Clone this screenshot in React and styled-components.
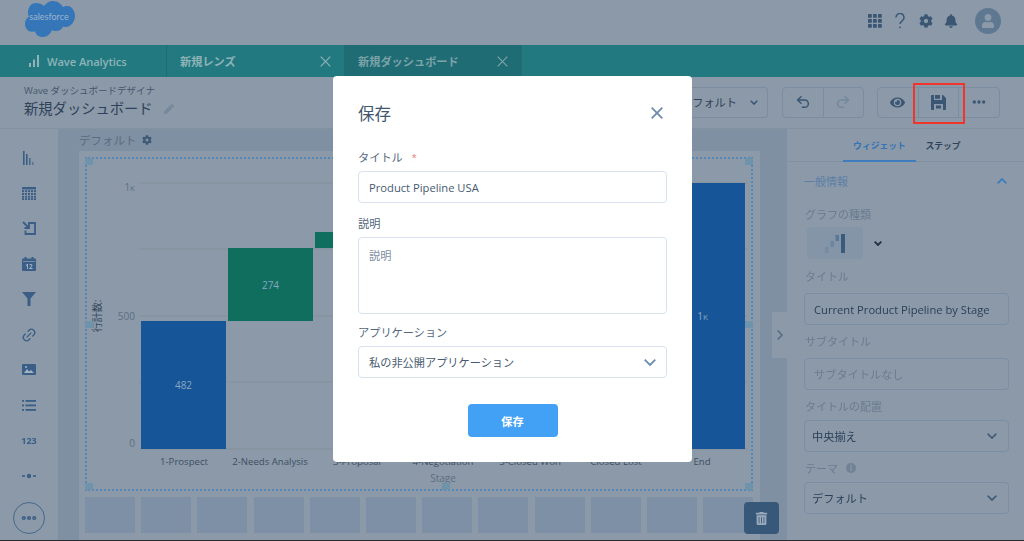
import React from 'react';
import styled, { createGlobalStyle } from 'styled-components';
import { Undo2, Redo2, MoreHorizontal, Link2 } from 'lucide-react';
import { FaCog, FaBell, FaUser, FaEye, FaPen, FaTrashAlt } from 'react-icons/fa';

const FONT = `"Open Sans", "Noto Sans CJK JP", sans-serif`;

const Global = createGlobalStyle`
  html, body { margin: 0; padding: 0; background: #8b99a8; }
  * { box-sizing: border-box; }
  body { font-family: ${FONT}; }
`;

const Page = styled.div`
  position: relative;
  width: 1024px;
  height: 541px;
  overflow: hidden;
  border-bottom: 1px solid #2c2c2e;
`;

const Backdrop = styled.div`
  display: flex;
  flex-direction: column;
  height: 100%;
  filter: blur(0.45px);
`;

const TopBar = styled.div`
  height: 45px;
  flex: none;
  display: flex;
  align-items: center;
  justify-content: space-between;
  padding: 0 23px;
  background: #8b99a8;
`;

const TopIcons = styled.div`
  display: flex;
  align-items: center;
  color: #3a5673;
  margin-top: -3px;
`;

const TopIcon = styled.span`
  display: flex;
  margin-left: ${p => p.$ml}px;
`;

const Avatar = styled.div`
  width: 26px;
  height: 26px;
  margin-left: 17px;
  border-radius: 50%;
  background: #5e7891;
  color: #8b99a8;
  display: flex;
  align-items: center;
  justify-content: center;
  overflow: hidden;
`;

const TabBar = styled.div`
  height: 32px;
  flex: none;
  display: flex;
  background: #227a80;
`;

const Tab = styled.div`
  width: ${p => p.$w}px;
  display: flex;
  align-items: center;
  justify-content: space-between;
  padding: 0 13px 0 ${p => p.$pl}px;
  font-size: 11.2px;
  font-weight: 600;
  border-right: 1px solid ${p => (p.$active ? '#1f6c75' : '#1d6c72')};
  background: ${p => (p.$active ? '#1f6c75' : 'transparent')};
  color: ${p => (p.$active ? '#7da3a8' : '#8fb3b8')};
`;

const TabLabel = styled.span`
  display: flex;
  align-items: center;
  gap: 7px;
  letter-spacing: -0.1px;
`;

const Header = styled.div`
  height: 52px;
  flex: none;
  display: flex;
  align-items: center;
  justify-content: space-between;
  padding: 0 24px;
  background: #8b99a8;
  border-bottom: 1px solid #83929f;
`;

const HeaderTitles = styled.div`
  display: flex;
  flex-direction: column;
  margin-top: -2px;
`;

const Crumb = styled.div`
  font-size: 9.5px;
  line-height: 14px;
  color: #46566b;
`;

const TitleRow = styled.div`
  display: flex;
  align-items: center;
  gap: 11px;
  font-size: 14.3px;
  line-height: 21px;
  color: #2f4259;
  svg { color: #76889b; }
`;

const Toolbar = styled.div`
  display: flex;
  align-items: center;
  margin-top: -1px;
`;

const ButtonGroup = styled.div`
  display: flex;
  width: ${p => p.$w}px;
  height: 31px;
  margin-left: ${p => p.$ml}px;
  border: 1px solid #7a8da1;
  border-radius: 4px;
`;

const ToolButton = styled.div`
  flex: 1;
  display: flex;
  align-items: center;
  justify-content: center;
  color: ${p => (p.$dim ? '#73889d' : '#3a5673')};
  & + & { border-left: 1px solid #7a8da1; }
`;

const ViewDrop = styled.div`
  display: flex;
  align-items: center;
  gap: 13px;
  height: 31px;
  padding-right: 9px;
  border: 1px solid #7a8da1;
  border-left: none;
  border-radius: 0 4px 4px 0;
  font-size: 11.2px;
  color: #2f4259;
`;

const Body = styled.div`
  flex: 1;
  min-height: 0;
  display: flex;
`;

const Rail = styled.div`
  width: 59px;
  flex: none;
  display: flex;
  flex-direction: column;
  align-items: center;
  background: #8b99a8;
  border-right: 1px solid #7f90a2;
  color: #3a5e85;
  padding-top: 11px;
`;

const RailItem = styled.div`
  height: 35.4px;
  flex: none;
  width: 100%;
  display: flex;
  align-items: center;
  justify-content: center;
  font-size: 9px;
  font-weight: 700;
`;

const RailMore = styled.div`
  width: 32px;
  height: 32px;
  margin-top: 8px;
  border: 1px solid #44698c;
  border-radius: 50%;
  display: flex;
  align-items: center;
  justify-content: center;
`;

const Canvas = styled.div`
  width: 728px;
  flex: none;
  position: relative;
  background: #7f90a3;
  padding-left: 20px;
`;

const CanvasTitle = styled.div`
  height: 22px;
  display: flex;
  align-items: center;
  gap: 5px;
  font-size: 11.5px;
  color: #5a6c80;
  svg { color: #3d5973; }
`;

const Sheet = styled.div`
  width: 681px;
  height: 390px;
  background: #8b99a8;
  padding: 6px;
`;

const Selection = styled.div`
  position: relative;
  width: 668px;
  height: 334px;
  border: 2px dotted #5287b8;
`;

const Handle = styled.span`
  position: absolute;
  width: 8px;
  height: 7px;
  background: #6f93ab;
  left: ${p => p.$x}px;
  top: ${p => p.$y}px;
`;

const ChipRow = styled.div`
  display: flex;
  gap: 6.2px;
  margin-top: 6px;
`;

const Chip = styled.div`
  width: 50px;
  height: 36px;
  flex: none;
  background: #7e90a5;
`;

const TrashBtn = styled.div`
  position: absolute;
  left: 685px;
  top: 373px;
  width: 35px;
  height: 32px;
  border-radius: 4px;
  background: #38587a;
  color: #9aaaba;
  display: flex;
  align-items: center;
  justify-content: center;
`;

const Collapser = styled.div`
  position: absolute;
  right: 0;
  top: 183px;
  width: 15px;
  height: 46px;
  background: #8b99a8;
  color: #4f6a85;
  display: flex;
  align-items: center;
  justify-content: center;
`;

const Panel = styled.div`
  flex: 1;
  background: #8b99a8;
  display: flex;
  flex-direction: column;
`;

const PanelTabs = styled.div`
  height: 33px;
  flex: none;
  display: flex;
  padding-left: 56px;
  border-bottom: 1px solid #7f90a2;
`;

const PanelTab = styled.div`
  width: ${p => p.$w}px;
  display: flex;
  align-items: center;
  justify-content: center;
  font-size: 8.8px;
  font-weight: 700;
  color: ${p => (p.$on ? '#3573b3' : '#2f4259')};
  box-shadow: ${p => (p.$on ? 'inset 0 -2px 0 #3f7dbd' : 'none')};
  margin-bottom: -1px;
`;

const PanelBody = styled.div`
  padding: 0 15px 0 17px;
`;

const Section = styled.div`
  height: 37px;
  margin-bottom: 5px;
  display: flex;
  align-items: center;
  justify-content: space-between;
  font-size: 11px;
  color: #5c7fa6;
  padding-right: 2px;
`;

const PLabel = styled.div`
  height: 20px;
  display: flex;
  align-items: center;
  gap: 8px;
  padding-left: 1px;
  font-size: 11px;
  color: #6b7c90;
`;

const ChartType = styled.div`
  display: flex;
  align-items: center;
  gap: 11px;
  margin: 3px 0 7px 3px;
`;

const ChartThumb = styled.div`
  width: 56px;
  height: 32px;
  border-radius: 4px;
  background: #8495a7;
  display: flex;
  align-items: center;
  justify-content: center;
`;

const PField = styled.div`
  height: 32px;
  margin: ${p => p.$mt}px 0 6px;
  display: flex;
  align-items: center;
  justify-content: space-between;
  padding: 0 ${p => (p.$sel ? 11 : 9)}px 0 ${p => (p.$sel ? 7 : 9)}px;
  border: 1px solid #7a8fa5;
  border-radius: 4px;
  font-size: 11.2px;
  white-space: nowrap;
  color: ${p => (p.$ph ? '#6b7c90' : '#2c4059')};
`;

const Dialog = styled.div`
  position: absolute;
  left: 333px;
  top: 76px;
  width: 359px;
  height: 386px;
  background: #fff;
  border-radius: 4px;
  padding: 0 25px;
  display: flex;
  flex-direction: column;
`;

const ModalHead = styled.div`
  height: 75px;
  flex: none;
  display: flex;
  align-items: center;
  justify-content: space-between;
  padding: 0 4px 1px 0;
  font-size: 16.5px;
  color: #41566f;
`;

const MLabel = styled.div`
  height: 20px;
  flex: none;
  font-size: 11.2px;
  line-height: 14px;
  color: #54677e;
  display: flex;
  align-items: flex-start;
  gap: 9px;
`;

const Req = styled.span`
  color: #e4776d;
  font-size: 9px;
`;

const MInput = styled.div`
  height: 32px;
  flex: none;
  margin-bottom: 14px;
  display: flex;
  align-items: center;
  justify-content: space-between;
  padding: 0 10px;
  border: 1px solid #d8e2ee;
  border-radius: 4px;
  font-size: 11.2px;
  color: #475a70;
`;

const MArea = styled.div`
  height: 77px;
  flex: none;
  margin-bottom: 12px;
  padding: 10px;
  border: 1px solid #d8e2ee;
  border-radius: 4px;
  font-size: 11.2px;
  line-height: 16px;
  color: #7d8ea3;
`;

const SaveButton = styled.div`
  align-self: center;
  width: 90px;
  height: 33px;
  margin-top: 12px;
  border-radius: 4px;
  background: #42a1f5;
  color: #fff;
  display: flex;
  align-items: center;
  justify-content: center;
  font-size: 11.2px;
  font-weight: 600;
`;

const RedBox = styled.div`
  position: absolute;
  left: 913px;
  top: 83px;
  width: 52px;
  height: 41px;
  border: 2px solid #f2352a;
`;

const Logo = () => (
  <svg width="52" height="37" viewBox="0 0 52 37" style={{ marginTop: -6 }}>
    <path fill="#3576b8" d="M21 5c2-3 5-5 9-5 5 0 8 3 10 6 1.500-.6 3-1 4-1 5 0 8 5 8 10s-4 11-9 11l-3-.3c-1 2.800-4 4.300-7 4.300-1.500 0-3-.4-4-1-1 3.500-5 7-9 7-5 0-7-2.500-8-5.500l-3 .3c-4 0-7-3.500-7-8 0-3 1.500-5.500 4-7-.5-1-1-2.500-1-4C5 5 9 2 13 2c3 0 6 1 8 3z"/>
    <text x="26" y="19" textAnchor="middle" fontFamily="Lato, sans-serif" fontSize="9" fill="#9bb4cd">salesforce</text>
  </svg>
);

const Chev = ({ w, up, c = 'currentColor', sw = 1.6 }) => {
  const h = Math.round(w * 0.58);
  return (
    <svg width={w} height={h} viewBox={`0 0 ${w} ${h}`} fill="none" stroke={c} strokeWidth={sw} style={{ flex: 'none' }}>
      <path d={up ? `M0.700 ${h - 0.7}L${w / 2} 1L${w - 0.7} ${h - 0.7}` : `M0.700 0.700L${w / 2} ${h - 1}L${w - 0.7} 0.700`} />
    </svg>
  );
};

const ChevRight = () => (
  <svg width="6" height="10" viewBox="0 0 6 10" fill="none" stroke="currentColor" strokeWidth="1.400">
    <path d="M0.700 0.500L5 5L0.700 9.500" />
  </svg>
);

const Cross = ({ s, c, sw }) => (
  <svg width={s} height={s} viewBox={`0 0 ${s} ${s}`} stroke={c} strokeWidth={sw} style={{ flex: 'none' }}>
    <path d={`M0.700 0.700L${s - 0.7} ${s - 0.7}M${s - 0.7} 0.700L0.700 ${s - 0.7}`} />
  </svg>
);

const AppGrid = () => (
  <svg width="14" height="14" viewBox="0 0 14 14" fill="currentColor">
    {[0, 5, 10].flatMap(y => [0, 5, 10].map(x => <rect key={`${x}-${y}`} x={x} y={y} width="3.800" height="3.800" rx=".6" />))}
  </svg>
);

const Help = () => (
  <svg width="10" height="16" viewBox="0 0 10 16" fill="none" stroke="currentColor" strokeWidth="1.400">
    <path d="M1 4.500a4 4 0 1 1 6.500 3C6 8.800 5 9.500 5 11" />
    <circle cx="5" cy="14.300" r=".9" fill="currentColor" stroke="none" />
  </svg>
);

const Floppy = () => (
  <svg width="15" height="15" viewBox="0 0 15 15" fill="#3a5673">
    <path fillRule="evenodd" d="M1 0h2v5h8V0h1l3 3v11a1 1 0 0 1-1 1H1a1 1 0 0 1-1-1V1a1 1 0 0 1 1-1zM4 0h5v3.800H4zM3 9v6h9V9z" />
    <rect x="5" y="10.500" width="5" height="3" />
  </svg>
);

const BarsIcon = () => (
  <svg width="12" height="14" viewBox="0 0 12 14" fill="currentColor">
    <rect x="0" y="0" width="1.600" height="14" />
    <rect x="3" y="3" width="1.600" height="11" />
    <rect x="6" y="7" width="1.600" height="7" opacity=".8" />
    <rect x="9" y="11" width="1.600" height="3" opacity=".6" />
  </svg>
);

const SignalIcon = () => (
  <svg width="11" height="12" viewBox="0 0 11 12" fill="#8fb3b8">
    <rect x="0" y="8" width="2" height="4" />
    <rect x="4" y="4.500" width="2" height="7.500" />
    <rect x="8" y="0" width="2" height="12" />
  </svg>
);

const TableIcon = () => (
  <svg width="14" height="13" viewBox="0 0 14 13" fill="currentColor">
    <rect x="0" y="0" width="14" height="2.400" />
    {[3.200, 6, 8.800, 11.200].flatMap(y => [0, 3, 6, 9, 12].map(x => <rect key={`${x}-${y}`} x={x} y={y} width="2.100" height="1.900" />))}
  </svg>
);

const ImportIcon = () => (
  <svg width="14" height="14" viewBox="0 0 14 14" fill="none" stroke="currentColor" strokeWidth="1.800">
    <path d="M1 1l6 6M7 2.500V7H2.500" />
    <path d="M6 2h7v11H3.500V9.500" />
  </svg>
);

const CalIcon = () => (
  <svg width="14" height="14" viewBox="0 0 14 14" fill="currentColor">
    <rect x="2.500" y="0" width="2" height="3" />
    <rect x="9.500" y="0" width="2" height="3" />
    <rect x="0" y="1.500" width="14" height="12.500" rx="1" />
    <rect x="1" y="4" width="12" height=".8" fill="#8b99a8" />
    <text x="7" y="12" textAnchor="middle" fontSize="6.500" fontWeight="700" fill="#a3b3c2" fontFamily="Open Sans, sans-serif">12</text>
  </svg>
);

const FunnelIcon = () => (
  <svg width="14" height="14" viewBox="0 0 14 14" fill="currentColor">
    <path d="M0 0h14L8.500 6.500V14h-3V6.500z" />
  </svg>
);

const PictureIcon = () => (
  <svg width="14" height="12" viewBox="0 0 14 12">
    <rect width="14" height="11" rx="1" fill="currentColor" />
    <path d="M2 9l3-4 2 2.500 2-1.500 3 3z" fill="#a3b3c2" />
    <circle cx="4" cy="3" r="1" fill="#a3b3c2" />
  </svg>
);

const ListIcon = () => (
  <svg width="14" height="11" viewBox="0 0 14 11" fill="currentColor">
    {[0, 4.500, 9].map(y => (
      <g key={y}>
        <rect x="0" y={y} width="2" height="1.800" />
        <rect x="3.500" y={y} width="10.500" height="1.800" />
      </g>
    ))}
  </svg>
);

const Dot = () => (
  <svg width="14" height="6" viewBox="0 0 14 6" fill="currentColor">
    <circle cx="7" cy="3" r="2.200" />
    <rect x="0" y="2.200" width="3" height="1.600" />
    <rect x="11" y="2.200" width="3" height="1.600" />
  </svg>
);

const Waterfall = () => (
  <svg width="20" height="19" viewBox="0 0 20 19">
    <rect x="0" y="13" width="3.500" height="6" fill="#738ba3" />
    <rect x="5.500" y="7" width="3.500" height="6" fill="#6d85a0" />
    <rect x="10.500" y="1" width="3.500" height="6" fill="#5a7794" />
    <rect x="16" y="0" width="4" height="19" fill="#3a5a7e" />
  </svg>
);

const InfoGlyph = () => (
  <svg width="10" height="10" viewBox="0 0 10 10">
    <circle cx="5" cy="5" r="5" fill="#6f8296" />
    <rect x="4.300" y="4.200" width="1.400" height="3.800" fill="#8b99a8" />
    <rect x="4.300" y="2" width="1.400" height="1.400" fill="#8b99a8" />
  </svg>
);

/* Chart coordinates are page coordinates; the viewBox starts at the selection frame's inner corner. */
const OX = 87;
const OY = 159;
const bars = [
  { x: 141, y: 321, w: 85, h: 128, c: '#165597', t: '482' },
  { x: 228, y: 248, w: 85, h: 73, c: '#106e5f', t: '274' },
  { x: 315, y: 232, w: 85, h: 16, c: '#106e5f' },
  { x: 660, y: 183, w: 85, h: 266, c: '#165597', t: '1', k: true },
];
const xLabels = [
  ['1-Prospect', 184], ['2-Needs Analysis', 270], ['3-Proposal', 357], ['4-Negotiation', 443],
  ['5-Closed Won', 530], ['Closed Lost', 616], ['End', 702],
];

const Chart = () => (
  <svg width="664" height="330" viewBox={`${OX} ${OY} 664 330`} style={{ display: 'block' }} fontFamily="Open Sans, sans-serif">
    {[183, 249, 316, 382, 449].map(y => (
      <line key={y} x1="139" x2="748" y1={y} y2={y} stroke="#829199" strokeWidth="1" />
    ))}
    <text x="135" y="191" textAnchor="end" fontSize="10" fill="#5d6f83">1<tspan fontSize="8">K</tspan></text>
    <text x="135" y="320" textAnchor="end" fontSize="10" fill="#5d6f83">500</text>
    <text x="135" y="447" textAnchor="end" fontSize="10" fill="#5d6f83">0</text>
    <text transform="translate(101 316) rotate(-90)" textAnchor="middle" fontSize="10" fill="#34485e" fontFamily={FONT}>行計数:</text>
    {bars.map(b => (
      <g key={b.x}>
        <rect x={b.x} y={b.y} width={b.w} height={b.h} fill={b.c} />
        {b.t && (
          <text x={b.x + b.w / 2} y={b.y + b.h / 2 + 4} textAnchor="middle" fontSize="10" fill="#8aa6c2">
            {b.t}{b.k && <tspan fontSize="8">K</tspan>}
          </text>
        )}
      </g>
    ))}
    {xLabels.map(([t, x]) => (
      <text key={t} x={x} y="465" textAnchor="middle" fontSize="9.600" fill="#3d4f63">{t}</text>
    ))}
    <text x="443" y="482" textAnchor="middle" fontSize="10" fill="#5d6f83">Stage</text>
  </svg>
);

const handles = [[-2, -1], [658, -1], [-2, 162], [658, 162], [-2, 324], [658, 324], [355, 324]];

export default function App() {
  return (
    <Page>
      <Global />
      <Backdrop>
        <TopBar>
          <Logo />
          <TopIcons>
            <TopIcon $ml={0}><AppGrid /></TopIcon>
            <TopIcon $ml={13}><Help /></TopIcon>
            <TopIcon $ml={14}><FaCog size={14} /></TopIcon>
            <TopIcon $ml={11}><FaBell size={14} /></TopIcon>
            <Avatar><FaUser size={14} /></Avatar>
          </TopIcons>
        </TopBar>
        <TabBar>
          <Tab $w={167} $pl={29}><TabLabel><SignalIcon />Wave Analytics</TabLabel></Tab>
          <Tab $w={178} $pl={13}>新規レンズ<Cross s={11} c="#8fb3b8" sw={1.2} /></Tab>
          <Tab $w={177} $pl={13} $active>新規ダッシュボード<Cross s={11} c="#7da3a8" sw={1.2} /></Tab>
        </TabBar>
        <Header>
          <HeaderTitles>
            <Crumb>Wave ダッシュボードデザイナ</Crumb>
            <TitleRow>新規ダッシュボード<FaPen size={10} /></TitleRow>
          </HeaderTitles>
          <Toolbar>
            <ViewDrop>デフォルト<Chev w={8} c="#3a5673" /></ViewDrop>
            <ButtonGroup $w={82} $ml={14}>
              <ToolButton><Undo2 size={16} strokeWidth={2.200} /></ToolButton>
              <ToolButton $dim><Redo2 size={16} strokeWidth={2.200} /></ToolButton>
            </ButtonGroup>
            <ButtonGroup $w={123} $ml={13}>
              <ToolButton><FaEye size={15} /></ToolButton>
              <ToolButton><Floppy /></ToolButton>
              <ToolButton><MoreHorizontal size={16} strokeWidth={3} /></ToolButton>
            </ButtonGroup>
          </Toolbar>
        </Header>
        <Body>
          <Rail>
            <RailItem><BarsIcon /></RailItem>
            <RailItem><TableIcon /></RailItem>
            <RailItem><ImportIcon /></RailItem>
            <RailItem><CalIcon /></RailItem>
            <RailItem><FunnelIcon /></RailItem>
            <RailItem><Link2 size={16} strokeWidth={2} style={{ transform: 'rotate(-45deg)' }} /></RailItem>
            <RailItem><PictureIcon /></RailItem>
            <RailItem><ListIcon /></RailItem>
            <RailItem>123</RailItem>
            <RailItem><Dot /></RailItem>
            <RailMore><MoreHorizontal size={18} strokeWidth={3.500} /></RailMore>
          </Rail>
          <Canvas>
            <CanvasTitle>デフォルト<FaCog size={10} /></CanvasTitle>
            <Sheet>
              <Selection>
                <Chart />
                {handles.map(([x, y]) => <Handle key={`${x}${y}`} $x={x} $y={y} />)}
              </Selection>
              <ChipRow>
                {Array.from({ length: 12 }).map((_, i) => <Chip key={i} />)}
              </ChipRow>
            </Sheet>
            <TrashBtn><FaTrashAlt size={13} /></TrashBtn>
            <Collapser><ChevRight /></Collapser>
          </Canvas>
          <Panel>
            <PanelTabs>
              <PanelTab $w={73} $on>ウィジェット</PanelTab>
              <PanelTab $w={54}>ステップ</PanelTab>
            </PanelTabs>
            <PanelBody>
              <Section>一般情報<Chev w={10} up c="#3f7dbd" sw={1.8} /></Section>
              <PLabel>グラフの種類</PLabel>
              <ChartType>
                <ChartThumb><Waterfall /></ChartThumb>
                <Chev w={8} c="#1f2f40" sw={1.8} />
              </ChartType>
              <PLabel>タイトル</PLabel>
              <PField $mt={7}>Current Product Pipeline by Stage</PField>
              <PLabel>サブタイトル</PLabel>
              <PField $mt={7} $ph>サブタイトルなし</PField>
              <PLabel>タイトルの配置</PLabel>
              <PField $mt={4} $sel>中央揃え<Chev w={10} c="#3a5673" /></PField>
              <PLabel>テーマ<InfoGlyph /></PLabel>
              <PField $mt={4} $sel>デフォルト<Chev w={10} c="#3a5673" /></PField>
            </PanelBody>
          </Panel>
        </Body>
      </Backdrop>
      <RedBox />
      <Dialog>
        <ModalHead>保存<Cross s={12} c="#6d8cae" sw={1.8} /></ModalHead>
        <MLabel>タイトル<Req>*</Req></MLabel>
        <MInput>Product Pipeline USA</MInput>
        <MLabel>説明</MLabel>
        <MArea>説明</MArea>
        <MLabel>アプリケーション</MLabel>
        <MInput>私の非公開アプリケーション<Chev w={12} c="#6d8cae" sw={1.8} /></MInput>
        <SaveButton>保存</SaveButton>
      </Dialog>
    </Page>
  );
}
